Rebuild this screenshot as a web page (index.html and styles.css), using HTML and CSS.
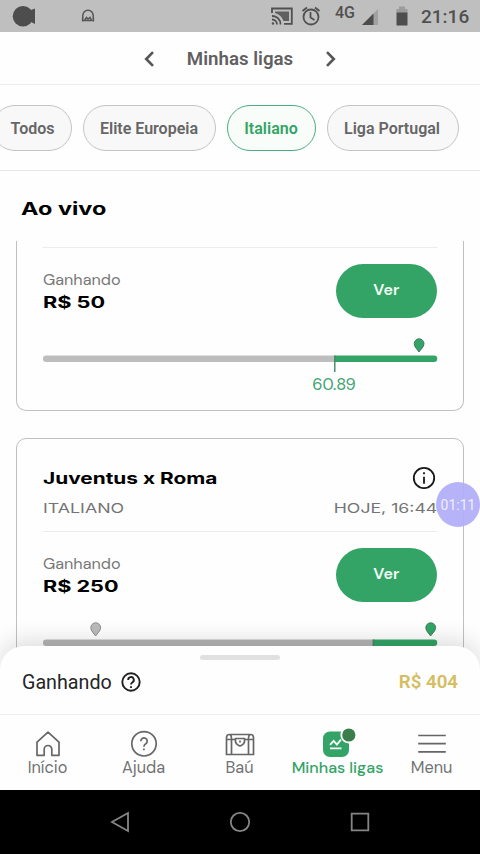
FILE: index.html
```html
<!DOCTYPE html>
<html lang="pt-BR">
<head>
<meta charset="utf-8">
<title>Minhas ligas</title>
<link rel="stylesheet" href="styles.css">
</head>
<body>
<div class="phone">
  <div class="status">
    <svg class="status-art" width="340" height="32" viewBox="0 0 340 32">
      <circle cx="23" cy="16.200" r="10.300" fill="#4d4d4d"/>
      <path d="M31 10 35 8.500V24L31 22Z" fill="#4d4d4d"/>
      <path d="M82.800 21V15.500a5.200 5.200 0 0 1 10.400 0V21M82.600 17.500v4M93.400 17.500v4M84.500 20.500l2-3 1.500 1.500 2-1.500 1.500 3Z" fill="none" stroke="#555" stroke-width="1.500"/>
      <g fill="none" stroke="#505050" stroke-width="1.800">
        <path d="M272 13V8.500h19.800v15.300H284M272 16a8 8 0 0 1 8.500 8.500M272 19.500a5 5 0 0 1 5 5"/>
        <path d="M275 13V11.500h14v9.500h-5.500q-2-6-8.500-8Z" fill="#606060" stroke="none"/>
        <circle cx="273" cy="23.500" r="1.200" fill="#505050" stroke="none"/>
        <circle cx="311" cy="17" r="7.500"/>
        <path d="M310.500 12v5.500l4 2.500M302.500 11l4.500-3.500M315 7.500l4.500 3.500"/>
      </g>
    </svg>
    <span class="net">4G</span>
    <svg class="signal" width="50" height="32" viewBox="0 0 50 32">
      <path d="M18 9v16H2Z" fill="#a2a2a2"/><path d="M13.500 13.500V25H2Z" fill="#4d4d4d"/>
      <path d="M39 6.500h6V9h2.500v4h-11V9H39Z" fill="#9b9b9b"/><path d="M36.500 12.500h11v13h-11Z" fill="#4d4d4d"/>
    </svg>
    <span class="clock">21:16</span>
  </div>

  <header class="header">
    <svg width="12" height="18" viewBox="0 0 12 18"><path d="M10 2.200 3.200 9l6.800 6.800"/></svg>
    <h1>Minhas ligas</h1>
    <svg width="12" height="18" viewBox="0 0 12 18"><path d="M2 2.200 8.800 9 2 15.800"/></svg>
  </header>

  <div class="filters">
    <button class="pill todos">Todos</button>
    <button class="pill elite">Elite Europeia</button>
    <button class="pill italiano active">Italiano</button>
    <button class="pill portugal">Liga Portugal</button>
  </div>

  <h2 class="section-title"><span class="wide">Ao vivo</span></h2>

  <main class="list">
    <article class="card first">
      <div class="summary">
        <div class="prize"><div class="label">Ganhando</div><div class="amount"><span class="wide fifty">R$ 50</span></div></div>
        <button class="view">Ver</button>
      </div>
      <div class="track">
        <svg class="meter" width="395" height="36" viewBox="0 0 395 36">
          <path d="M3.200 17.500H291.500V24H3.200a3.200 3.200 0 0 1 0-6.500Z" fill="#bdbdbd"/>
          <path d="M291.500 17.500H391a3.200 3.200 0 0 1 0 6.500H291.500Z" fill="#33a466"/>
          <path d="M291.800 17.500V34" stroke="#438767" stroke-width="1.400"/>
          <path d="M376 14c-1.500-2.500-4.800-5-4.800-8.300a4.900 4.900 0 0 1 9.800 0C381 9 377.500 11.500 376 14Z" fill="#33a466" stroke="#447e5e"/>
        </svg>
        <div class="score">60.89</div>
      </div>
    </article>

    <article class="card second">
      <div class="match">
        <h3><span class="wide game">Juventus x Roma</span></h3>
        <svg width="24" height="24" viewBox="0 0 24 24" fill="none" stroke="#171717" stroke-width="1.800"><circle cx="12" cy="12" r="10.200"/><path d="M12 10.700v7M12 6.300v2"/></svg>
      </div>
      <div class="meta"><span class="wide league">ITALIANO</span><span class="wide when">HOJE, 16:44</span></div>
      <div class="summary">
        <div class="prize"><div class="label">Ganhando</div><div class="amount"><span class="wide twofifty">R$ 250</span></div></div>
        <button class="view">Ver</button>
      </div>
      <div class="track">
        <svg class="meter" width="395" height="36" viewBox="0 0 395 36">
          <path d="M3.200 17.500H330V24H3.200a3.200 3.200 0 0 1 0-6.500Z" fill="#b5b5b5"/>
          <path d="M330 17.500H391a3.200 3.200 0 0 1 0 6.500H330Z" fill="#33a466"/>
          <path d="M330.300 17.500V30" stroke="#438767" stroke-width="1.400"/>
          <path d="M52.600 14c-1.500-2.500-4.800-5-4.800-8.300a4.900 4.900 0 0 1 9.800 0c0 3.300-3.500 5.800-5 8.300Z" fill="#bbb" stroke="#8c8c8c"/>
          <path d="M387.600 14c-1.500-2.500-4.800-5-4.800-8.300a4.900 4.900 0 0 1 9.800 0c0 3.300-3.500 5.800-5 8.300Z" fill="#33a466" stroke="#447e5e"/>
        </svg>
      </div>
    </article>
  </main>

  <section class="sheet">
    <div class="handle"></div>
    <div class="total">
      <span class="total-label">Ganhando</span>
      <svg width="20" height="20" viewBox="0 0 20 20" fill="none" stroke="#202020" stroke-width="1.900"><circle cx="10" cy="10" r="8.700"/><path d="M7.200 8a2.800 2.800 0 1 1 4.300 2.200C10.300 11 10 11.400 10 12.500M10 14.200v1.800"/></svg>
      <span class="total-value">R$ 404</span>
    </div>
  </section>

  <nav class="tabs">
    <a class="tab inicio">
      <svg width="30" height="30" viewBox="0 0 30 30"><path d="M15 3.200 4 13.200V26.300h7.200v-6a3.800 3.800 0 0 1 7.600 0v6H26V13.200Z" stroke-linejoin="round"/></svg>
      <span>Início</span>
    </a>
    <a class="tab ajuda">
      <svg width="30" height="30" viewBox="0 0 30 30"><circle cx="15" cy="14.800" r="12.200"/><path d="M11.800 12.200a3.200 3.200 0 1 1 5 2.600c-1.500 1-1.900 1.400-1.900 3M14.900 19.400v1.900"/></svg>
      <span>Ajuda</span>
    </a>
    <a class="tab bau">
      <svg width="30" height="30" viewBox="0 0 30 30"><path d="M1.500 25.500V8.500q0-3 3-3H25.500q3 0 3 3v17ZM1.500 10.500H10.500M19.500 10.500h9M6.500 25.500V9q0-2.500-1.500-3.500M23.500 25.500V9q0-2.500 1.500-3.500M10.500 9.500h9v3.500q-1 3-4.500 4-3.500-1-4.500-4Z"/><path d="M15 11.500v2"/></svg>
      <span>Baú</span>
    </a>
    <a class="tab ligas active">
      <svg width="36" height="30" viewBox="0 0 36 30"><rect x="3" y="2.500" width="26" height="25.500" rx="7" fill="#33a466" stroke="none"/><path d="m10 15.800 3.700-4 3.200 3.700 4-4.800M10 19.300h11.500" stroke="#fff" stroke-width="1.800"/><circle cx="28.800" cy="6" r="7.500" fill="#3b7d4b" stroke="#fff" stroke-width="1.800"/></svg>
      <span>Minhas ligas</span>
    </a>
    <a class="tab menu">
      <svg width="30" height="30" viewBox="0 0 30 30"><path d="M1.200 6.500h27.600M1.200 14.700h27.600M1.200 22.900h27.600"/></svg>
      <span>Menu</span>
    </a>
  </nav>

  <div class="system">
    <svg width="20" height="22" viewBox="0 0 20 22"><path d="M18 2v18L2 11Z"/></svg>
    <svg width="22" height="22" viewBox="0 0 22 22"><circle cx="11" cy="11" r="9.200"/></svg>
    <svg width="20" height="22" viewBox="0 0 20 22"><path d="M1.700 2.700h16.600v16.600H1.700Z"/></svg>
  </div>

  <div class="recorder">01:11</div>
</div>
</body>
</html>
```
FILE: styles.css
```css
* { box-sizing: border-box; }
body { margin: 0; background: #fefefe; font-family: "DM Sans", Inter, sans-serif; }
h1, h2, h3 { margin: 0; }
button { margin: 0; padding: 0; font: inherit; }
svg { display: block; flex: none; overflow: visible; }
.phone { position: relative; display: flex; flex-direction: column; width: 480px; height: 854px; overflow: hidden; }

.status { flex: none; display: flex; height: 32px; background: #bfbfbf; color: #505050; font-family: Roboto, sans-serif; }
.status-art { margin-right: -5px; }
.net { width: 25px; padding-top: 4px; font-size: 16px; font-weight: 500; line-height: 18px; }
.signal { flex: none; }
.clock { margin-left: 11px; font-size: 19px; font-weight: 500; line-height: 34px; white-space: nowrap; }

.header { flex: none; display: flex; align-items: center; justify-content: center; gap: 32px; height: 53px; padding-top: 1px; border-bottom: 1px solid #eee; }
.header h1 { color: #606060; font: 600 18.700px/24px Roboto, sans-serif; }
.header path { fill: none; stroke: #555; stroke-width: 2.600; }

.filters { flex: none; display: flex; gap: 11px; height: 86px; padding-top: 20px; border-bottom: 1px solid #e7e7e7; }
.pill { flex: none; height: 46px; border: 1.500px solid #c4c4c4; border-radius: 23px; background: #f8f8f8; color: #666; font: 600 16px/43px Roboto, sans-serif; text-indent: -1px; }
.todos { width: 80px; margin-left: -8px; text-indent: 1px; }
.elite { width: 133px; }
.italiano { width: 89px; }
.portugal { width: 132px; text-indent: -2px; }
.pill.active { border-color: #4bac80; background: #f8fdf9; color: #33a466; }

.wide { display: inline-block; font-family: Inter, sans-serif; transform-origin: left center; white-space: nowrap; }
.section-title { flex: none; height: 70px; padding: 26px 21px 0; color: #000; font-size: 17.500px; font-weight: 700; line-height: 24px; }
.section-title .wide { transform: scaleX(1.340); }

.list { flex: none; height: 429px; padding: 0 16px; overflow: hidden; }
.card { width: 448px; border: 1.500px solid #c0c0c0; border-radius: 10px; padding: 0 26px; }
.card.first { height: 170px; border-top: 0; border-radius: 0 0 10px 10px; padding-top: 6px; }
.card.second { height: 280px; margin-top: 27px; padding-top: 27px; }
.match { display: flex; align-items: center; justify-content: space-between; height: 24px; padding-right: 1px; }
.match h3 { padding-top: 2px; font-size: 15.500px; font-weight: 700; line-height: 24px; }
.match .wide { transform: scaleX(1.345); }
.meta { display: flex; justify-content: space-between; height: 41px; padding-top: 7px; color: #747474; font-size: 13.200px; font-weight: 400; line-height: 22px; }
.league { transform: scaleX(1.350); }
.when { transform: scaleX(1.340); transform-origin: right center; }
.summary { display: flex; justify-content: space-between; height: 89px; border-top: 1px solid #ececec; padding-top: 16px; }
.prize { padding-top: 4px; }
.label { color: #777; font-size: 16.200px; line-height: 23px; }
.amount { padding-top: 1px; color: #000; font-size: 15.500px; font-weight: 700; line-height: 21px; }
.fifty { transform: scaleX(1.400); }
.twofifty { transform: scaleX(1.395); }
.view { width: 101.500px; height: 54px; border: 0; border-radius: 27px; background: #33a466; color: #f4fff6; font-size: 16px; font-weight: 600; line-height: 50px; padding-bottom: 3px; }
.track { height: 60px; padding-top: 2px; }
.score { width: 60px; margin: 1px 0 0 261px; color: #42a371; font-size: 16.300px; line-height: 20px; text-align: center; }

.sheet { position: relative; flex: none; height: 69px; margin-top: -24px; border-bottom: 1px solid #eee; border-radius: 24px 24px 0 0; background: #fefefe; box-shadow: 0 -6px 22px rgba(0, 0, 0, .13); }
.handle { width: 80px; height: 5px; margin: 9px auto 0; border-radius: 3px; background: #e1e1e1; }
.sheet::before { content: ""; display: table; }
.total { display: flex; align-items: center; height: 44px; padding: 0 22px; font-family: Roboto, sans-serif; font-size: 19.700px; }
.total-label { width: 99px; color: #252525; }
.total-value { margin-left: auto; color: #d5bd60; font-size: 18.700px; font-weight: 600; }

.tabs { position: relative; flex: none; display: flex; height: 75px; padding-top: 14px; background: #fefefe; }
.tab { display: flex; flex-direction: column; align-items: center; width: 96px; color: #727272; font-size: 16.300px; line-height: 17px; }
.tab svg { fill: none; stroke: #666; stroke-width: 1.700; }
.tab.active { padding-left: 3px; color: #33a466; font-size: 16px; font-weight: 500; }
.tab span { white-space: nowrap; }
.tab:not(.active) span { margin-right: 1px; }

.system { position: relative; flex: none; display: flex; align-items: center; justify-content: center; gap: 99px; height: 64px; background: #000; }
.system svg { fill: none; stroke: #858585; stroke-width: 1.800; }

.recorder { position: absolute; left: 436px; top: 482px; width: 44px; height: 45px; border-radius: 50%; background: rgba(177, 173, 249, .93); color: #eef; font: 14px/46px Roboto, sans-serif; text-align: center; }
```
